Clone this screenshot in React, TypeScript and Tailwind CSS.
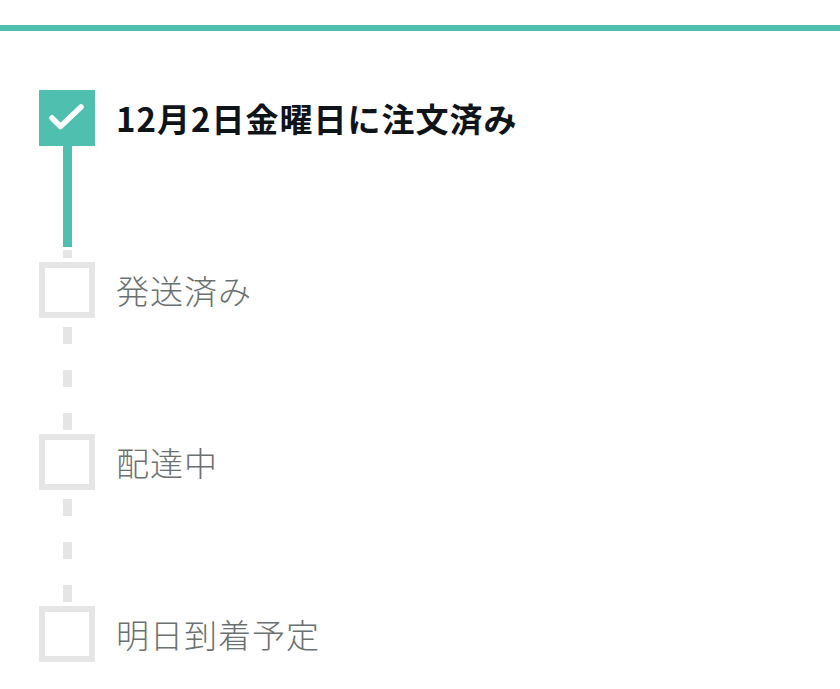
import React from "react";

const FONT = { fontFamily: '"Noto Sans CJK JP", "Noto Sans", sans-serif' };

// ─── Step box ───────────────────────────────────────────────────────────────
function StepBox({ done }: { done: boolean }) {
  if (done) {
    return (
      <div className="w-[56px] h-[56px] shrink-0 bg-[#4fbfb0]">
        <svg width="56" height="56" viewBox="0 0 56 56" fill="none">
          <path d="M13 28 L21.5 36.5 L42 17" stroke="white" strokeWidth="5.5" strokeLinecap="round" strokeLinejoin="round" />
        </svg>
      </div>
    );
  }
  return <div className="w-[56px] h-[56px] shrink-0 border-[6px] border-[#e5e5e5] bg-white" />;
}

// ─── Connectors ─────────────────────────────────────────────────────────────
function DoneConnector() {
  return (
    <div className="w-[56px] h-[116px] flex flex-col items-center">
      <div className="w-[9px] h-[101px] bg-[#4fbfb0]" />
      <div className="w-[9px] h-[8px] mt-[3px] bg-[#e5e5e5]" />
    </div>
  );
}

function DashedConnector() {
  return (
    <div className="w-[56px] h-[116px] flex flex-col items-center pt-[9px] gap-[26px]">
      <div className="w-[9px] h-[17px] bg-[#e5e5e5]" />
      <div className="w-[9px] h-[17px] bg-[#e5e5e5]" />
      <div className="w-[9px] h-[17px] bg-[#e5e5e5]" />
    </div>
  );
}

const STEPS = [
  { label: "12月2日金曜日に注文済み", done: true },
  { label: "発送済み", done: false },
  { label: "配達中", done: false },
  { label: "明日到着予定", done: false },
];

export default function App() {
  return (
    <div className="w-[840px] h-[689px] bg-white overflow-hidden" style={FONT}>
      <div className="h-[6px] mt-[25px] bg-[#4fbfb0]" />
      <div className="pt-[59px] pl-[39px] flex flex-col">
        {STEPS.map((s, i) => (
          <div key={s.label} className="flex flex-col">
            <div className="flex items-center gap-[21px]">
              <StepBox done={s.done} />
              <span
                className={
                  s.done
                    ? "text-[33px] leading-none tracking-[1px] font-bold text-[#0f1419]"
                    : "text-[33px] leading-none tracking-[1px] font-light text-[#6b7070]"
                }
              >
                {s.label}
              </span>
            </div>
            {i < STEPS.length - 1 && (i === 0 ? <DoneConnector /> : <DashedConnector />)}
          </div>
        ))}
      </div>
    </div>
  );
}
